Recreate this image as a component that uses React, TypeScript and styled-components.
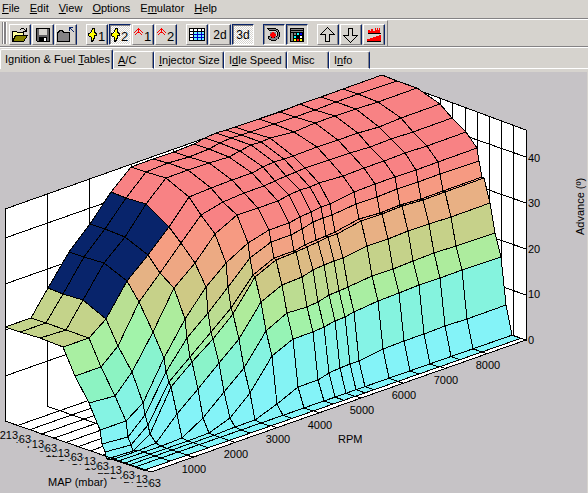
import React from "react";
import styled, { createGlobalStyle, css } from "styled-components";

const face = "#d6d3ce";
const shadow = "#848284";
const navy = "#08246b";
const canvas = "#c6c3c6";

const GlobalStyle = createGlobalStyle`
  html, body, #root { height: 100%; }
  body {
    margin: 0;
    background: ${canvas};
    color: #000;
    font: 11px/13px "Liberation Sans", Arial, sans-serif;
  }
  button { font: inherit; color: inherit; }
`;

const Window = styled.div`
  display: flex;
  flex-direction: column;
  min-height: 100%;
  background: ${face};
`;

const MenuBar = styled.nav`
  display: flex;
  box-sizing: border-box;
  height: 19px;
  gap: 10px;
  padding: 0 2px 2px;
  border-bottom: 1px solid ${shadow};
`;

const MenuItem = styled.button`
  border: 0;
  padding: 0;
  background: none;
`;

const ToolStrip = styled.div`
  display: flex;
  height: 28px;
  box-sizing: border-box;
  border-top: 1px solid #fff;
  border-bottom: 1px solid ${shadow};
`;

const Tools = styled.div`
  display: flex;
  gap: 9px;
  padding: 3px 2px 0 1px;
  border-top: 1px solid #fff;
  border-right: 1px solid ${shadow};
`;

const Grip = styled.div`
  box-sizing: border-box;
  width: 2px;
  height: 22px;
  margin: -2px -3px 0 0;
  border-right: 1px solid ${shadow};
  box-shadow: 1px 0 #fff, 3px 0 ${shadow}, 4px 0 #fff;
`;

const ToolGroup = styled.div`
  display: flex;
  gap: 1px;
`;

const ToolButton = styled.button<{ $down?: boolean; $dither?: boolean }>`
  display: flex;
  align-items: center;
  justify-content: center;
  box-sizing: border-box;
  width: 22px;
  height: 21px;
  padding: 1px 0 0;
  font-size: 12px;
  background: ${face};
  border: 1px solid;
  ${(p) =>
    p.$down
      ? css`
          border-color: ${navy} #fff #fff ${navy};
          box-shadow: inset 1px 1px ${shadow};
        `
      : css`
          border-color: #fff ${navy} ${shadow} #fff;
          box-shadow: inset -1px 0 ${shadow};
        `}
  ${(p) =>
    p.$dither &&
    css`
      background: repeating-conic-gradient(#fff 0 25%, ${face} 0 50%) 0 0 / 2px 2px;
    `}
  svg {
    flex: none;
  }
`;

const TabBar = styled.div`
  display: flex;
  align-items: flex-end;
  height: 21px;
  border-top: 1px solid #fff;
`;

const Tab = styled.button<{ $active?: boolean; $w: number }>`
  box-sizing: border-box;
  width: ${(p) => p.$w}px;
  height: ${(p) => (p.$active ? 20 : 18)}px;
  padding: 0 4px;
  text-align: left;
  white-space: nowrap;
  background: ${face};
  border: 0 solid;
  border-width: 1px 1px ${(p) => (p.$active ? 0 : 1)}px 1px;
  border-color: #fff ${navy} #fff #fff;
  border-radius: 2px 2px 0 0;
  box-shadow: inset -1px 0 ${shadow};
`;

const TabRest = styled.div`
  flex: 1;
  border-bottom: 1px solid #fff;
`;

const Page = styled.main`
  flex: 1;
  margin: 3px 1px 0 0;
  background: ${canvas};
`;

const Plot = styled.svg`
  display: block;
  width: 100%;
  font: 11px "Liberation Sans", Arial, sans-serif;
`;

/* ---- surface data: screen offsets along each axis and heights ---- */

const rpm = [0, 26, 43, 64, 85, 106, 126, 148, 169, 189, 200, 211, 221, 230, 254, 275, 295, 316, 338, 377];
const map = [0, 15, 35, 58, 70, 84, 95, 97, 100, 102, 108, 113, 119, 124, 130, 139];

const floorY = (r: number, m: number) => 422 - 0.35 * r + 0.347 * m;

// A zero marks a vertex that lies on the floor plane.
const heights = [
  [327, 318, 288, 252, 224, 192, 167, 159, 152, 144, 138, 133, 130, 127, 119, 112, 104, 97, 89, 75],
  [332, 323, 294, 257, 229, 198, 172, 163, 157, 149, 143, 138, 135, 132, 124, 117, 110, 102, 94, 81],
  [338, 330, 300, 263, 237, 204, 178, 170, 163, 157, 151, 145, 142, 138, 132, 123, 116, 109, 102, 88],
  [347, 338, 319, 281, 255, 227, 197, 188, 180, 173, 167, 162, 159, 156, 147, 140, 133, 127, 118, 104],
  [376, 367, 346, 302, 273, 243, 215, 202, 193, 186, 181, 176, 172, 168, 160, 153, 147, 139, 132, 118],
  [403, 396, 372, 332, 288, 263, 234, 215, 208, 201, 195, 190, 187, 183, 176, 168, 161, 153, 146, 132],
  [430, 421, 403, 358, 319, 287, 263, 243, 230, 223, 217, 212, 207, 204, 192, 184, 177, 170, 162, 148],
  [444, 437, 415, 372, 338, 313, 287, 258, 242, 235, 229, 222, 218, 215, 204, 197, 189, 182, 174, 161],
  [452, 445, 425, 382, 357, 332, 308, 275, 258, 251, 245, 240, 236, 232, 219, 213, 205, 199, 191, 177],
  [459, 451, 434, 387, 362, 339, 314, 277, 260, 252, 247, 242, 237, 234, 221, 214, 206, 200, 192, 178],
  [0, 0, 443, 414, 389, 363, 339, 302, 285, 277, 270, 265, 261, 258, 246, 239, 231, 224, 217, 203],
  [0, 0, 0, 438, 418, 392, 368, 331, 313, 307, 302, 295, 291, 287, 276, 269, 261, 253, 246, 233],
  [0, 0, 0, 0, 433, 418, 393, 356, 339, 332, 327, 321, 317, 312, 301, 293, 285, 278, 270, 257],
  [0, 0, 0, 0, 0, 427, 420, 404, 387, 380, 373, 368, 364, 361, 349, 341, 334, 326, 319, 305],
  [],
  [],
];

type Vertex = { x: number; y: number; z: number };

const vertex = (i: number, j: number): Vertex => {
  const f = floorY(rpm[j], map[i]);
  const y = heights[i][j] || f;
  return { x: 5 + rpm[j] + map[i], y, z: Math.max(0, (f - y) / 4.55) };
};

const stops: [number, number[]][] = [
  [0, [132, 243, 248]],
  [4, [132, 243, 240]],
  [7, [134, 243, 214]],
  [11, [142, 243, 188]],
  [14, [162, 243, 170]],
  [17, [176, 234, 154]],
  [21, [197, 210, 138]],
  [24, [208, 198, 132]],
  [27, [231, 177, 132]],
  [32, [246, 156, 130]],
  [36, [248, 136, 132]],
  [38, [248, 130, 132]],
];

const shade = (z: number) => {
  const k = stops.findIndex(([s]) => s > z);
  if (k < 0) return "rgb(248,130,132)";
  const [a, ca] = stops[k - 1];
  const [b, cb] = stops[k];
  const t = (z - a) / (b - a);
  return `rgb(${ca.map((c, n) => Math.round(c + (cb[n] - c) * t)).join(",")})`;
};

const cells: { points: string; fill: string }[] = [];
for (let i = 0; i < map.length - 1; i++) {
  for (let j = rpm.length - 2; j >= 0; j--) {
    const q = [vertex(i, j), vertex(i, j + 1), vertex(i + 1, j + 1), vertex(i + 1, j)];
    const selected = i < 3 && j >= 2 && j < 5;
    cells.push({
      points: q.map((v) => `${v.x},${v.y}`).join(" "),
      fill: selected ? navy : shade(Math.min(...q.map((v) => v.z))),
    });
  }
}

const range = (n: number) => Array.from({ length: n }, (_, k) => k);

const SurfacePlot = () => (
  <Plot viewBox="0 72 587 421" role="img" aria-label="Advance by MAP and RPM">
    <g fill="#fff" stroke="#000" shapeRendering="crispEdges">
      <polygon points="5,209 380,76 380,289 5,421" />
      <polygon points="380,76 526,130 526,340 380,289" />
      <polygon points="5,421 380,289 526,340 151,472" />
      {range(9).map((k) => (
        <path key={k} d={`M${5 + 42 * k},${209 - 14.9 * k} V${421 - 14.8 * k} l146,51`} />
      ))}
      {range(12).map((k) => (
        <path
          key={k}
          fill="none"
          d={`M${526 - 12.2 * k},${130 - 4.5 * k} V${340 - 4.2 * k} l-375,132`}
        />
      ))}
      {range(4).map((k) => (
        <path key={k} fill="none" d={`M5,${238 + 46 * k} L380,${106 + 46 * k} L526,${157 + 46 * k}`} />
      ))}
    </g>
    <g stroke="#000" shapeRendering="crispEdges">
      {cells.map((c, k) => (
        <polygon key={k} points={c.points} fill={c.fill} />
      ))}
    </g>
    {range(12)
      .reverse()
      .map((k) => {
        const label = String(213 + 250 * k);
        const w = label.length * 6;
        const right = 18 + 13 * k;
        const base = 439 + Math.round(4.4 * k);
        return (
          <g key={k}>
            <rect x={right - w} y={base - 10} width={w} height={13} fill={canvas} />
            <text x={right} y={base} textAnchor="end">
              {label}
            </text>
          </g>
        );
      })}
    <path d="M5,421 L151,472" stroke="#000" shapeRendering="crispEdges" />
    {range(8).map((k) => (
      <text key={k} x={194 + 42 * k} y={473 - Math.round(14.8 * k)} textAnchor="middle">
        {(k + 1) * 1000}
      </text>
    ))}
    {range(5).map((k) => (
      <text key={k} x={528} y={344 - Math.round(45.6 * k)}>
        {k * 10}
      </text>
    ))}
    <text x="48" y="486">MAP (mbar)</text>
    <text x="338" y="443">RPM</text>
    <text transform="translate(584 235) rotate(-90)">Advance (º)</text>
  </Plot>
);

/* ---- toolbar drawings ---- */

const Glyph = ({ children, w = 18 }: { children: React.ReactNode; w?: number }) => (
  <svg width={w} height={16} viewBox={`0 0 ${w} 16`} shapeRendering="crispEdges" aria-hidden="true">
    {children}
  </svg>
);

const OpenIcon = () => (
  <Glyph>
    <path d="M1.5 14.5V4.5h4l1 1h6v3" fill="#ffff9c" stroke="#000" />
    <path d="M1.5 14.5l3-6h12l-4 6z" fill="#848200" stroke="#000" />
    <path d="M9 2.5h1M10 1.5h3M13 2.5h1M14 3.5h1M12 4.5h4M15.5 1v4" stroke="#000" />
  </Glyph>
);

const SaveIcon = () => (
  <Glyph>
    <path d="M2.5 1.5h13v13h-12l-1-1z" fill="#636163" stroke="#000" />
    <path d="M5 2h8v6H5z" fill={face} />
    <path d="M5 10h8v4H5z" fill="#000" />
    <path d="M10 11h2v3h-2z" fill="#fff" />
  </Glyph>
);

const FolderUpIcon = () => (
  <Glyph>
    <path d="M0.5 14.5v-9h1l1-2h3l1 2h6v9z" fill="#848284" stroke="#000" />
    <path d="M12 0h4v1h-3v3h-1zM13 1h1v1h-1zM14 2h1v1h-1zM15 3h1v1h-1zM16 4h1v1h-1z" fill={navy} />
  </Glyph>
);

const NumberText = styled.text`
  font: 13px "Liberation Sans", Arial, sans-serif;
`;

const BoltIcon = ({ n }: { n: number }) => (
  <Glyph w={20}>
    <path d="M5.5 1.5h2v4l2 1v2h-2v2l-2 4h-1v-4l-3-2v-2l3-1z" fill="#ff0" stroke="#000" />
    <NumberText x="11" y="14">{n}</NumberText>
  </Glyph>
);

const tracePixels = [
  [5, 1], [4, 2], [6, 2], [3, 3], [7, 3], [2, 4], [8, 4], [1, 5], [9, 5],
  [5, 2], [5, 3], [5, 4], [4, 5], [6, 5], [5, 5], [3, 6], [7, 6], [2, 7], [8, 7],
];

const TraceIcon = ({ n }: { n: number }) => (
  <Glyph w={20}>
    {tracePixels.map(([x, y]) => (
      <rect key={`${x}-${y}`} x={x} y={y} width="1" height="1" fill="#f00" />
    ))}
    <NumberText x="11" y="14">{n}</NumberText>
  </Glyph>
);

const TableIcon = () => (
  <Glyph>
    <path d="M1.5 1.5h15v12h-15z" fill="#fff" stroke="#000" />
    <path d="M5 5h11v8H5z" fill="#6bf3ff" />
    <path d="M5.5 2v11M1 4.5h15" stroke="#000" />
    <path d="M9.5 5v8M13.5 5v8M5 7.5h11M5 10.5h11" stroke="#0000c6" />
    <path d="M9.5 2v3M13.5 2v3M2 7.5h3M2 10.5h3" stroke="#000" />
  </Glyph>
);

const TurboIcon = () => (
  <Glyph>
    <path
      d="M2.5 1.5h7l3 1 2 3v4l-2 3-3 1h-3l-3-2v-2h2l2 1h2l3-2v-3l-2-2h-6z"
      fill="#848284"
      stroke="#000"
    />
    <path d="M5 5h6v5H5z" fill="#848284" />
    <path d="M7 5h2v1h1v1h1v2h-1v1h-1v1H7v-1H6V9H5V7h1V6h1z" fill="#f00" />
  </Glyph>
);

const palette = ["#848284", "#0ff", "#00f", "#0ff", "#000", "#fff", "#ff0", "#f00", "#ff0"];

const PanelIcon = () => (
  <Glyph>
    <path d="M2 1h14v14H2z" fill="#000" />
    <path d="M3 2h12v1H3zM3 4h12v1H3zM3 6h2v8H3z" fill="#848284" />
    {palette.map((c, k) => (
      <rect key={k} x={6 + (k % 3) * 3} y={6 + Math.floor(k / 3) * 3} width="2" height="2" fill={c} />
    ))}
  </Glyph>
);

const ArrowIcon = ({ down }: { down?: boolean }) => (
  <Glyph>
    <path
      d={down ? "M6.5 1.5h4v7h5l-7 7-7-7h5z" : "M6.5 14.5h4v-7h5l-7-7-7 7h5z"}
      fill={face}
      stroke="#000"
    />
  </Glyph>
);

const HistoryIcon = () => (
  <Glyph>
    <path d="M3 6V3h2v1h1V2h2v2h2V1h1v2h1V1h1v2h1V1h1v5z" fill="#f00" />
    <path d="M3 6.5h13" stroke="#000" />
    <path d="M2 14v-2h3v-1h3v-1h3V9h3V8h2v6z" fill="#f00" />
    <path d="M2 14.5h14" stroke="#000" />
  </Glyph>
);

const menus = [
  ["", "F", "ile"],
  ["", "E", "dit"],
  ["", "V", "iew"],
  ["", "O", "ptions"],
  ["E", "m", "ulator"],
  ["", "H", "elp"],
];

const tabs: { t: string[]; w: number }[] = [
  { t: ["Ignition & Fuel ", "T", "ables"], w: 113 },
  { t: ["", "A", "/C"], w: 41 },
  { t: ["", "I", "njector Size"], w: 70 },
  { t: ["I", "d", "le Speed"], w: 63 },
  { t: ["Misc", "", ""], w: 42 },
  { t: ["I", "n", "fo"], w: 41 },
];

const Mnemonic = ({ parts: [a, b, c] }: { parts: string[] }) => (
  <>
    {a}
    {b && <u>{b}</u>}
    {c}
  </>
);

export default function App() {
  return (
    <Window>
      <GlobalStyle />
      <MenuBar>
        {menus.map((m) => (
          <MenuItem key={m.join("")}>
            <Mnemonic parts={m} />
          </MenuItem>
        ))}
      </MenuBar>
      <ToolStrip>
        <Tools role="toolbar">
          <Grip />
          <ToolGroup>
            <ToolButton aria-label="Open"><OpenIcon /></ToolButton>
            <ToolButton aria-label="Save"><SaveIcon /></ToolButton>
            <ToolButton aria-label="Close"><FolderUpIcon /></ToolButton>
          </ToolGroup>
          <ToolGroup>
            <ToolButton aria-label="Ignition 1"><BoltIcon n={1} /></ToolButton>
            <ToolButton aria-label="Ignition 2" $down $dither><BoltIcon n={2} /></ToolButton>
            <ToolButton aria-label="Fuel 1"><TraceIcon n={1} /></ToolButton>
            <ToolButton aria-label="Fuel 2"><TraceIcon n={2} /></ToolButton>
          </ToolGroup>
          <ToolGroup>
            <ToolButton aria-label="Table"><TableIcon /></ToolButton>
            <ToolButton>2d</ToolButton>
            <ToolButton $down $dither>3d</ToolButton>
          </ToolGroup>
          <ToolGroup>
            <ToolButton aria-label="Turbo" $down><TurboIcon /></ToolButton>
            <ToolButton aria-label="Panel" $down><PanelIcon /></ToolButton>
          </ToolGroup>
          <ToolGroup>
            <ToolButton aria-label="Up"><ArrowIcon /></ToolButton>
            <ToolButton aria-label="Down"><ArrowIcon down /></ToolButton>
            <ToolButton aria-label="History"><HistoryIcon /></ToolButton>
          </ToolGroup>
        </Tools>
      </ToolStrip>
      <TabBar role="tablist">
        {tabs.map(({ t, w }, k) => (
          <Tab key={k} role="tab" aria-selected={k === 0} $active={k === 0} $w={w}>
            <Mnemonic parts={t} />
          </Tab>
        ))}
        <TabRest />
      </TabBar>
      <Page>
        <SurfacePlot />
      </Page>
    </Window>
  );
}
